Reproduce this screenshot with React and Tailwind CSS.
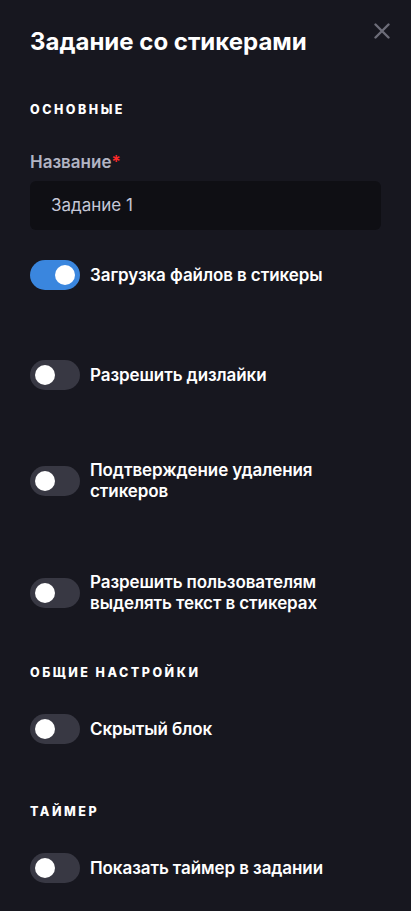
import React from "react";

function Toggle({ on }) {
  return (
    <div
      className={
        "relative h-[30px] w-[50px] shrink-0 rounded-full " +
        (on ? "bg-[#3a86de]" : "bg-[#383843]")
      }
    >
      <div
        className={
          "absolute top-[5px] h-[20px] w-[20px] rounded-full bg-white " +
          (on ? "left-[25px]" : "left-[5px]")
        }
      />
    </div>
  );
}

function Row({ on, children, className = "" }) {
  return (
    <div className={"flex items-center gap-[10px] " + className}>
      <Toggle on={on} />
      <div className="text-[17px] font-semibold leading-[21px] tracking-[-0.005em] text-white">{children}</div>
    </div>
  );
}

function Heading({ children, className = "" }) {
  return (
    <div className={"text-[12.5px] font-extrabold uppercase leading-[16px] tracking-[0.2em] text-white " + className}>
      {children}
    </div>
  );
}

export default function App() {
  return (
    <div
      className="min-h-[911px] w-[411px] bg-[#17171f] px-[30px]"
      style={{ fontFamily: "Inter, 'Noto Sans', sans-serif" }}
    >
      <div className="flex items-start justify-between pt-[26px]">
        <h1 className="text-[24px] font-bold leading-[32px] text-white">Задание со стикерами</h1>
        <svg width="16" height="16" viewBox="0 0 16 16" className="mr-[-9px] mt-[-3px]">
          <path d="M1.5 1.5 L14.5 14.5 M14.5 1.5 L1.5 14.5" stroke="#6d6d78" strokeWidth="2.4" strokeLinecap="round" />
        </svg>
      </div>

      <Heading className="mt-[44px]">Основные</Heading>

      <div className="mt-[34px] text-[17px] font-semibold leading-[20px] text-[#b2b4c3]">
        Название<span className="text-[#ff2a2a]">*</span>
      </div>
      <div className="mt-[9px] flex h-[49px] items-center rounded-[6px] bg-[#0f0f14] px-[21px] text-[17px] text-[#c6c8d8]">
        Задание 1
      </div>

      <Row on className="mt-[30px]">Загрузка файлов в стикеры</Row>
      <Row className="mt-[70px]">Разрешить дизлайки</Row>
      <Row className="mt-[70px]">
        Подтверждение удаления
        <br />
        стикеров
      </Row>
      <Row className="mt-[70px]">
        Разрешить пользователям
        <br />
        выделять текст в стикерах
      </Row>

      <Heading className="mt-[51px]">Общие настройки</Heading>
      <Row className="mt-[33px]">Скрытый блок</Row>

      <Heading className="mt-[60px]">Таймер</Heading>
      <Row className="mt-[33px]">Показать таймер в задании</Row>
    </div>
  );
}
